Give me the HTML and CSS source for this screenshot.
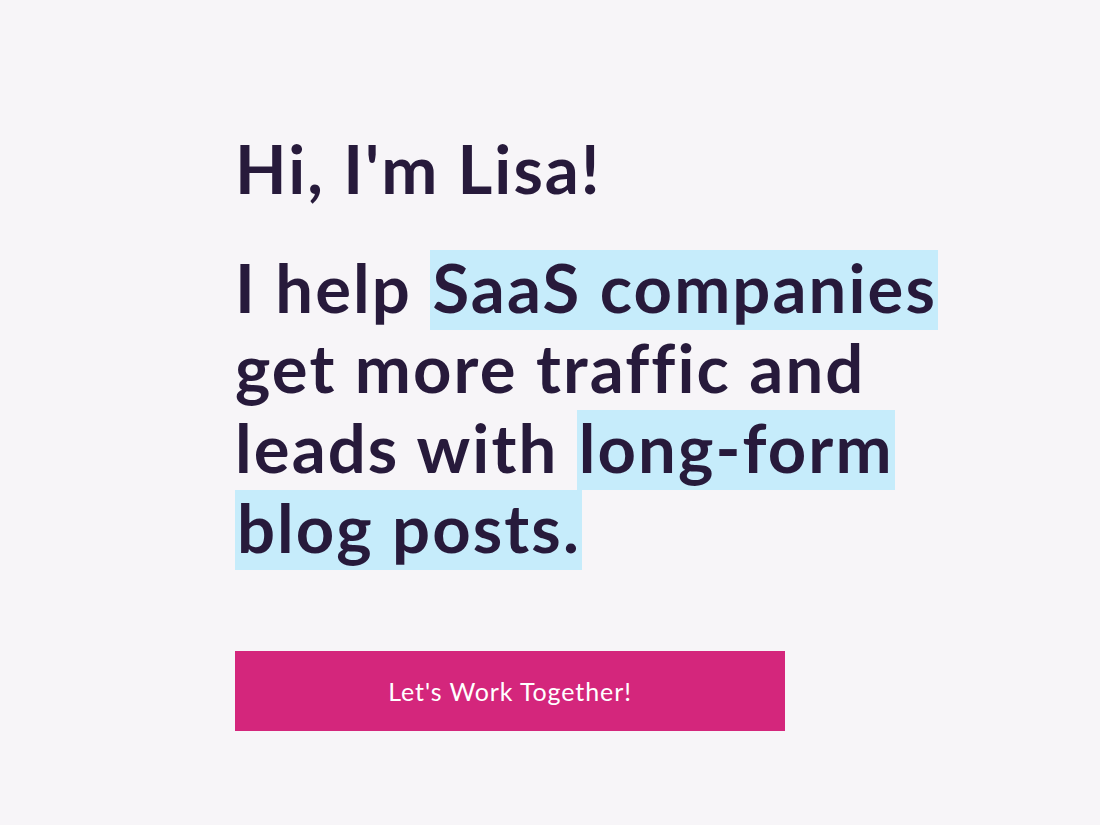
FILE: index.html
```html
<!DOCTYPE html>
<html lang="en">
<head>
<meta charset="utf-8">
<title>Lisa</title>
<link rel="stylesheet" href="styles.css">
</head>
<body>
<main class="hero">
  <h1 class="greeting">Hi, I'm Lisa!</h1>
  <p class="pitch">I help <span class="mark">SaaS companies</span><br>get more traffic and<br>leads with <span class="mark">long-form</span><br><span class="mark">blog posts.</span></p>
  <a class="cta" href="#">Let's Work Together!</a>
</main>
</body>
</html>
```

FILE: styles.css
```css
html, body {
  margin: 0;
  padding: 0;
  background: #f7f5f8;
}
body {
  width: 1100px;
  height: 825px;
  overflow: hidden;
  font-family: Lato, "Noto Sans", sans-serif;
  color: #271a3b;
}
.hero {
  display: flex;
  flex-direction: column;
  align-items: flex-start;
  padding: 128px 0 0 235px;
}
.greeting {
  margin: 0;
  font-size: 67px;
  font-weight: 700;
  line-height: 80px;
  letter-spacing: 2px;
}
.pitch {
  margin: 39px 0 0 0;
  font-size: 67px;
  font-weight: 700;
  line-height: 80px;
  letter-spacing: 2.1px;
}
.mark {
  background: linear-gradient(#c6ecfb, #c6ecfb) no-repeat left bottom / 100% calc(100% - 3px);
  padding: 0 1px 3px 2px;
  -webkit-box-decoration-break: clone;
  box-decoration-break: clone;
}
.cta {
  margin-top: 84px;
  width: 550px;
  height: 80px;
  display: flex;
  align-items: center;
  justify-content: center;
  background: #d4267c;
  color: #ffffff;
  text-decoration: none;
  font-size: 25px;
  font-weight: 400;
  letter-spacing: 0.9px;
}
```
